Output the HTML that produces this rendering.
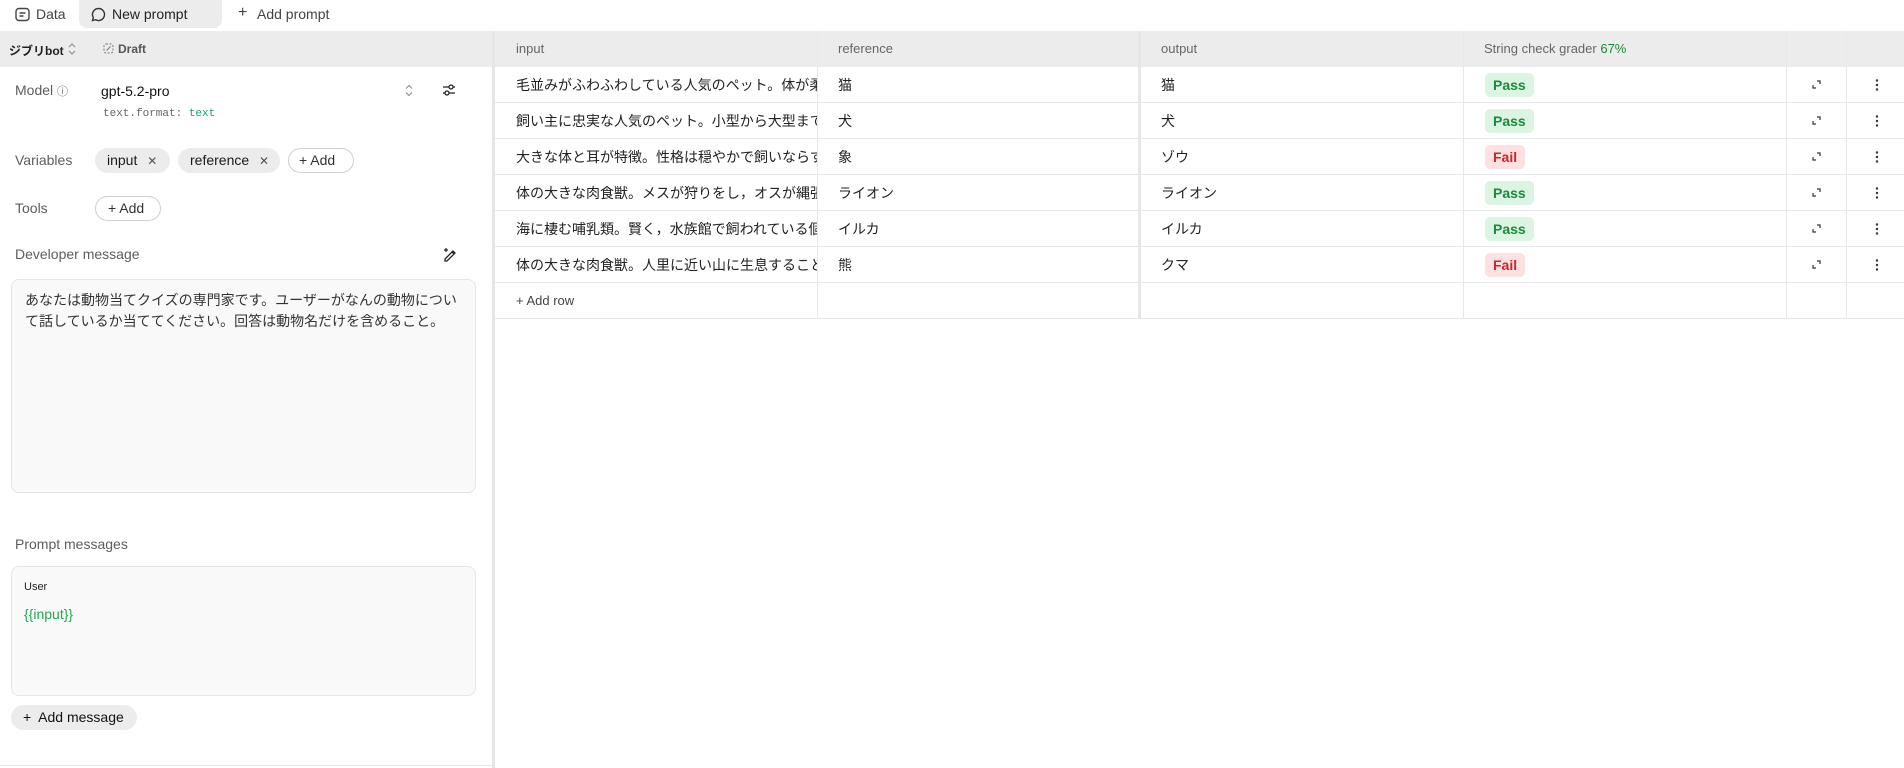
<!DOCTYPE html>
<html><head><meta charset="utf-8"><style>
*{box-sizing:border-box;margin:0;padding:0}
body{width:1904px;height:768px;overflow:hidden;background:#fff;font-family:"Liberation Sans","Noto Sans CJK JP",sans-serif;color:#1a1a1a;font-size:14px;position:relative}
.a{position:absolute}
.muted{color:#5d5d5d}
.chip{position:absolute;height:25px;border-radius:13px;background:#ececec;font-size:14px;line-height:25px;padding-left:12px}
.chipo{position:absolute;height:25px;border-radius:13px;border:1px solid #d0d0d0;background:#fff;font-size:14px;line-height:23px;padding-left:10px;color:#333}
.hl{position:absolute;left:495px;width:1409px;height:1px;background:#e8e8e8}
.vl{position:absolute;width:1px;background:#e8e8e8;top:31px;height:287px}
.cell{position:absolute;font-size:14px;color:#222;white-space:nowrap;overflow:hidden;line-height:20px}
.hd{position:absolute;font-size:13px;color:#666;white-space:nowrap;line-height:20px}
.badge{position:absolute;height:24px;border-radius:5px;font-size:14px;font-weight:bold;line-height:24px;padding:0 8px}
.pass{background:#dcf5e3;color:#1a8a3c}
.fail{background:#fde0e0;color:#c4282d}
</style></head><body>
<!-- top bar -->
<svg class="a" style="left:15px;top:7px" width="15" height="15" viewBox="0 0 15 15"><rect x="1" y="1.5" width="13" height="12" rx="3" fill="none" stroke="#444" stroke-width="1.4"/><path d="M4.5 6h6M4.5 9h4" stroke="#444" stroke-width="1.4"/></svg>
<div class="a" style="left:36px;top:6px;font-size:14px;color:#444">Data</div>
<div class="a" style="left:79px;top:0;width:143px;height:28px;background:#ececec;border-radius:0 0 8px 8px"></div>
<svg class="a" style="left:91px;top:7px" width="15" height="15" viewBox="0 0 15 15"><path d="M7.5 1.5a6 6 0 1 1-3 11.2L1.5 13.5l.8-3A6 6 0 0 1 7.5 1.5z" fill="none" stroke="#333" stroke-width="1.4"/></svg>
<div class="a" style="left:112px;top:6px;font-size:14px;color:#222">New prompt</div>
<div class="a" style="left:238px;top:4px;font-size:16px;color:#444">+</div>
<div class="a" style="left:257px;top:6px;font-size:14px;color:#444">Add prompt</div>
<!-- header row -->
<div class="a" style="left:0;top:31px;width:1904px;height:36px;background:#ececec"></div>
<div class="a" style="left:9px;top:42px;font-size:12px;font-weight:bold;color:#222">ジブリbot</div>
<svg class="a" style="left:68px;top:43px" width="8" height="12" viewBox="0 0 8 12"><path d="M1 4l3-3 3 3M1 8l3 3 3-3" fill="none" stroke="#888" stroke-width="1"/></svg>
<svg class="a" style="left:103px;top:43px" width="11" height="11" viewBox="0 0 11 11"><rect x="1" y="1" width="9" height="9" rx="2" fill="none" stroke="#777" stroke-dasharray="2 1.5"/><path d="M3.5 7.5l4-4" stroke="#777"/></svg>
<div class="a" style="left:118px;top:42px;font-size:12px;font-weight:bold;color:#555">Draft</div>
<!-- separator -->
<div class="a" style="left:492px;top:31px;width:3px;height:737px;background:#e6e6e6"></div>
<!-- left panel -->
<div class="a muted" style="left:15px;top:82px;font-size:14px">Model <span style="font-size:11px">ⓘ</span></div>
<div class="a" style="left:101px;top:83px;font-size:14px;color:#111">gpt-5.2-pro</div>
<svg class="a" style="left:405px;top:84px" width="8" height="13" viewBox="0 0 8 13"><path d="M1 4.5l3-3 3 3M1 8.5l3 3 3-3" fill="none" stroke="#888" stroke-width="1"/></svg>
<svg class="a" style="left:442px;top:83px" width="14" height="14" viewBox="0 0 14 14"><path d="M1 4h12M1 10h12" stroke="#222" stroke-width="1.3"/><circle cx="9" cy="4" r="2" fill="#fff" stroke="#222" stroke-width="1.3"/><circle cx="5" cy="10" r="2" fill="#fff" stroke="#222" stroke-width="1.3"/></svg>
<div class="a" style="left:103px;top:108px;font-family:'Liberation Mono',monospace;font-size:11px;color:#666">text.format: <span style="color:#1aa074">text</span></div>
<div class="a muted" style="left:15px;top:152px">Variables</div>
<div class="chip" style="left:95px;top:148px;width:75px">input <span style="color:#555;margin-left:6px;font-size:12px">✕</span></div>
<div class="chip" style="left:178px;top:148px;width:102px">reference <span style="color:#555;margin-left:6px;font-size:12px">✕</span></div>
<div class="chipo" style="left:288px;top:148px;width:66px">+ Add</div>
<div class="a muted" style="left:15px;top:200px">Tools</div>
<div class="chipo" style="left:95px;top:196px;width:66px;padding-left:12px">+ Add</div>
<div class="a muted" style="left:15px;top:246px">Developer message</div>
<svg class="a" style="left:442px;top:247px" width="16" height="16" viewBox="0 0 16 16"><path d="M5 14H3v-2l8-8 2 2z M10 5l2 2" fill="none" stroke="#222" stroke-width="1.3"/><path d="M4 1v4M2 3h4" stroke="#222" stroke-width="1.2"/></svg>
<div class="a" style="left:11px;top:279px;width:465px;height:214px;background:#f9f9f9;border:1px solid #e6e6e6;border-radius:8px"></div>
<div class="a" style="left:25px;top:290px;width:440px;font-size:14px;line-height:21px;color:#333">あなたは動物当てクイズの専門家です。ユーザーがなんの動物について話しているか当ててください。回答は動物名だけを含めること。</div>
<div class="a muted" style="left:15px;top:536px">Prompt messages</div>
<div class="a" style="left:11px;top:566px;width:465px;height:130px;background:#f9f9f9;border:1px solid #e6e6e6;border-radius:8px"></div>
<div class="a" style="left:24px;top:581px;font-size:11px;color:#222">User</div>
<div class="a" style="left:24px;top:606px;font-size:14px;color:#22aa4a">{{input}}</div>
<div class="a" style="left:11px;top:705px;width:126px;height:25px;background:#ececec;border-radius:13px;font-size:14px;line-height:25px;padding-left:12px;color:#111">+&nbsp; Add message</div>
<div class="a" style="left:0;top:765px;width:492px;height:1px;background:#e6e6e6"></div>
<!-- table -->
<div class="vl" style="left:817px"></div>
<div class="a" style="left:1138px;top:31px;width:3px;height:287px;background:#e6e6e6"></div>
<div class="vl" style="left:1463px"></div>
<div class="vl" style="left:1786px"></div>
<div class="vl" style="left:1846px"></div>
<div class="hl" style="top:102px"></div><div class="hl" style="top:138px"></div><div class="hl" style="top:174px"></div><div class="hl" style="top:210px"></div><div class="hl" style="top:246px"></div><div class="hl" style="top:282px"></div><div class="hl" style="top:318px"></div>
<div class="hd" style="left:516px;top:39px">input</div>
<div class="hd" style="left:838px;top:39px">reference</div>
<div class="hd" style="left:1161px;top:39px">output</div>
<div class="hd" style="left:1484px;top:39px">String check grader <span style="color:#1a8a3c">67%</span></div>

<div class="cell" style="left:516px;top:75px;width:301px">毛並みがふわふわしている人気のペット。体が柔らかい</div>
<div class="cell" style="left:516px;top:111px;width:301px">飼い主に忠実な人気のペット。小型から大型まで</div>
<div class="cell" style="left:516px;top:147px;width:301px">大きな体と耳が特徴。性格は穏やかで飼いならすことが</div>
<div class="cell" style="left:516px;top:183px;width:301px">体の大きな肉食獣。メスが狩りをし，オスが縄張り</div>
<div class="cell" style="left:516px;top:219px;width:301px">海に棲む哺乳類。賢く，水族館で飼われている個体</div>
<div class="cell" style="left:516px;top:255px;width:301px">体の大きな肉食獣。人里に近い山に生息することもある</div>
<div class="cell" style="left:516px;top:291px;color:#444;font-size:13px">+ Add row</div>

<div class="cell" style="left:838px;top:75px">猫</div><div class="cell" style="left:838px;top:111px">犬</div><div class="cell" style="left:838px;top:147px">象</div><div class="cell" style="left:838px;top:183px">ライオン</div><div class="cell" style="left:838px;top:219px">イルカ</div><div class="cell" style="left:838px;top:255px">熊</div>
<div class="cell" style="left:1161px;top:75px">猫</div><div class="cell" style="left:1161px;top:111px">犬</div><div class="cell" style="left:1161px;top:147px">ゾウ</div><div class="cell" style="left:1161px;top:183px">ライオン</div><div class="cell" style="left:1161px;top:219px">イルカ</div><div class="cell" style="left:1161px;top:255px">クマ</div>

<div class="badge pass" style="left:1485px;top:73px">Pass</div>
<div class="badge pass" style="left:1485px;top:109px">Pass</div>
<div class="badge fail" style="left:1485px;top:145px">Fail</div>
<div class="badge pass" style="left:1485px;top:181px">Pass</div>
<div class="badge pass" style="left:1485px;top:217px">Pass</div>
<div class="badge fail" style="left:1485px;top:253px">Fail</div>

<svg width="0" height="0" style="position:absolute"><defs><g id="ex"><path d="M1 5v3h3M5 1h3v3" fill="none" stroke="#333" stroke-width="1.2"/></g><g id="dots"><circle cx="2" cy="1.5" r="1.2" fill="#333"/><circle cx="2" cy="6" r="1.2" fill="#333"/><circle cx="2" cy="10.5" r="1.2" fill="#333"/></g></defs></svg>
<svg class="a" style="left:1812px;top:80px" width="9" height="9"><use href="#ex"/></svg>
<svg class="a" style="left:1812px;top:116px" width="9" height="9"><use href="#ex"/></svg>
<svg class="a" style="left:1812px;top:152px" width="9" height="9"><use href="#ex"/></svg>
<svg class="a" style="left:1812px;top:188px" width="9" height="9"><use href="#ex"/></svg>
<svg class="a" style="left:1812px;top:224px" width="9" height="9"><use href="#ex"/></svg>
<svg class="a" style="left:1812px;top:260px" width="9" height="9"><use href="#ex"/></svg>
<svg class="a" style="left:1875px;top:79px" width="4" height="12"><use href="#dots"/></svg>
<svg class="a" style="left:1875px;top:115px" width="4" height="12"><use href="#dots"/></svg>
<svg class="a" style="left:1875px;top:151px" width="4" height="12"><use href="#dots"/></svg>
<svg class="a" style="left:1875px;top:187px" width="4" height="12"><use href="#dots"/></svg>
<svg class="a" style="left:1875px;top:223px" width="4" height="12"><use href="#dots"/></svg>
<svg class="a" style="left:1875px;top:259px" width="4" height="12"><use href="#dots"/></svg>
</body></html>
